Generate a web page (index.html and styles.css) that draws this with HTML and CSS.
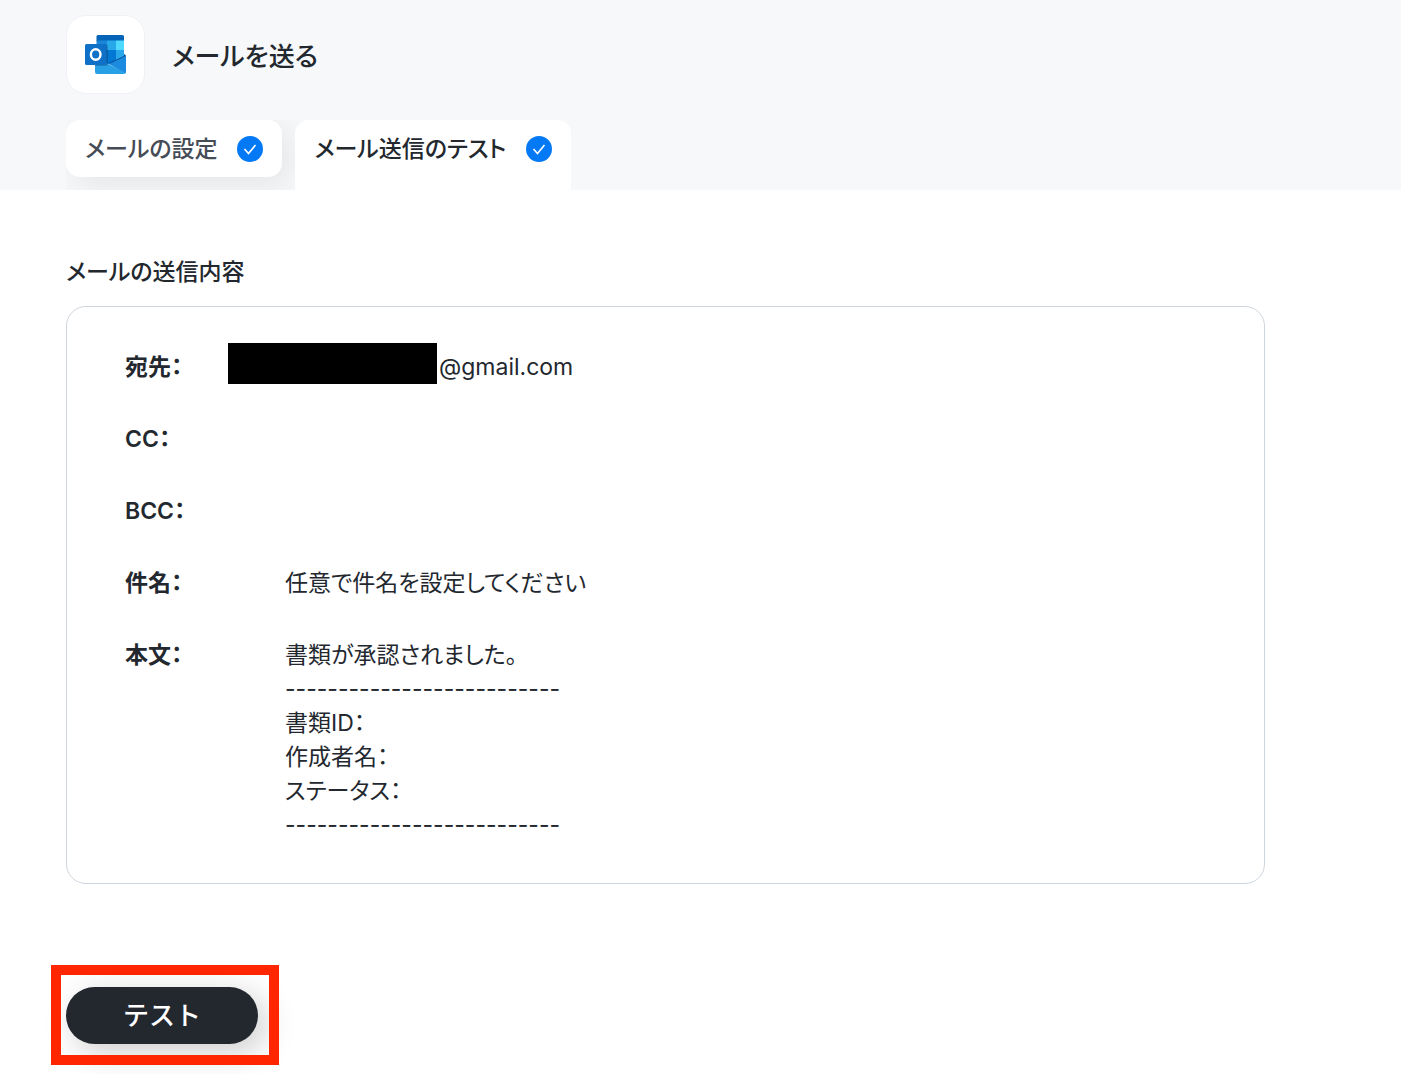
FILE: index.html
```html
<!DOCTYPE html>
<html lang="ja">
<head>
  <meta charset="UTF-8">
  <meta name="viewport" content="width=device-width, initial-scale=1.0">
  <title>メールを送る</title>
  <link rel="stylesheet" href="styles.css">
</head>
<body>
  <header class="header">
    <div class="title-row">
      <div class="app-icon">
        <svg width="42" height="39" viewBox="0 0 42 39" aria-hidden="true">
          <path d="M13 0h24.500q1.500 0 1.500 1.500V6H11.500V1.500Q11.500 0 13 0z" fill="#0364b8"/>
          <rect x="11.500" y="5.500" width="10.500" height="9.500" fill="#1a86d9"/>
          <rect x="22" y="5.500" width="9" height="9.500" fill="#28a8ea"/>
          <rect x="31" y="5.500" width="8" height="9.500" fill="#50d9ff"/>
          <rect x="11.500" y="15" width="10.500" height="14" fill="#0f6cbd"/>
          <rect x="22" y="15" width="9" height="14" fill="#0078d4"/>
          <rect x="31" y="15" width="8" height="14" fill="#28a8ea"/>
          <path d="M39 19l1.500 1q.5.500.5 1.500L26 30l-2-2L39 21z" fill="#0a4a94"/>
          <path d="M41 21v16q0 1-1 1.500L24 29z" fill="#1c8ade"/>
          <path d="M10 22l30.500 16q-.5 1-2 1H12q-2 0-2-2z" fill="#28a0e6"/>
          <path d="M11.500 9.500h9.500a2 2 0 0 1 2 2V29a2 2 0 0 1-2 2H10V22z" fill="#000" opacity=".2"/>
          <rect x="0" y="9" width="21.500" height="21" rx="1.500" fill="#0f70c8"/>
          <ellipse cx="10.700" cy="19.500" rx="4.800" ry="5.200" fill="none" stroke="#fff" stroke-width="2.400"/>
        </svg>
      </div>
      <h1>メールを送る</h1>
    </div>
    <nav class="tabs">
      <a class="tab" href="#settings">メールの設定
        <svg class="check" viewBox="0 0 26 26" aria-hidden="true"><circle cx="13" cy="13" r="13"/><path d="M7.500 13l4 4.500 7-8.500"/></svg>
      </a>
      <a class="tab active" href="#test" aria-current="page">メール送信のテスト
        <svg class="check" viewBox="0 0 26 26" aria-hidden="true"><circle cx="13" cy="13" r="13"/><path d="M7.500 13l4 4.500 7-8.500"/></svg>
      </a>
    </nav>
  </header>

  <main class="content" id="test">
    <h2>メールの送信内容</h2>
    <dl class="mail-card">
      <div class="mail-row">
        <dt>宛先：</dt>
        <dd class="address"><span class="mask"></span>@gmail.com</dd>
      </div>
      <div class="mail-row">
        <dt>CC：</dt>
        <dd></dd>
      </div>
      <div class="mail-row">
        <dt>BCC：</dt>
        <dd></dd>
      </div>
      <div class="mail-row">
        <dt>件名：</dt>
        <dd>任意で件名を設定してください</dd>
      </div>
      <div class="mail-row">
        <dt>本文：</dt>
        <dd>書類が承認されました。<br>
          --------------------------<br>
          書類ID：<br>
          作成者名：<br>
          ステータス：<br>
          --------------------------</dd>
      </div>
    </dl>
    <div class="action">
      <button class="test-btn" type="button">テスト</button>
    </div>
  </main>
</body>
</html>
```

FILE: styles.css
```css
* {
  box-sizing: border-box;
}
body {
  margin: 0;
  font-family: Inter, 'Noto Sans CJK JP', sans-serif;
  font-size: 23px;
  line-height: 34px;
  font-feature-settings: 'palt';
  color: #23282f;
  background: #fff;
}
h1, h2, dl, dd {
  margin: 0;
}
.header {
  padding: 15px 66px 0;
  background: #f7f8fa;
}
.title-row {
  display: flex;
  align-items: center;
  gap: 27px;
  margin-bottom: 26px;
}
.app-icon {
  display: flex;
  align-items: center;
  justify-content: center;
  width: 79px;
  height: 79px;
  background: #fff;
  border: 1px solid #f0f1f4;
  border-radius: 20px;
}
h1 {
  padding-top: 4px;
  font-size: 26px;
  font-weight: 500;
}
.tabs {
  display: flex;
  align-items: flex-start;
  gap: 13px;
  width: fit-content;
  overflow: hidden;
}
.tab {
  display: flex;
  align-items: center;
  gap: 20px;
  height: 57px;
  padding: 0 19px;
  border-radius: 14px;
  background: #fff;
  color: #454c56;
  text-decoration: none;
  font-weight: 500;
  box-shadow: 8px 8px 32px rgba(0, 0, 0, 0.08);
}
.tab.active {
  height: 70px;
  padding-bottom: 13px;
  border-radius: 14px 14px 0 0;
  color: #23282f;
  box-shadow: none;
}
.check {
  width: 26px;
  height: 26px;
}
.check circle {
  fill: #0479f5;
}
.check path {
  fill: none;
  stroke: #fff;
  stroke-width: 1.6;
}
.content {
  padding: 65px 136px 30px 66px;
}
h2 {
  margin-bottom: 17px;
  font-size: 23px;
  font-weight: 500;
}
.mail-card {
  display: flex;
  flex-direction: column;
  gap: 38px;
  padding: 43px 58px 41px;
  border: 1px solid #d0d6de;
  border-radius: 20px;
}
.mail-row {
  display: flex;
}
dt {
  width: 160px;
  font-weight: 600;
}
.address {
  position: relative;
  padding-left: 154px;
}
/* hides the local part of the address */
.mask {
  position: absolute;
  top: -7px;
  left: -57px;
  width: 209px;
  height: 41px;
  background: #000;
}
.action {
  position: relative;
  width: fit-content;
  margin-top: 103px;
}
.action::after {
  content: '';
  position: absolute;
  inset: -22px -21px -21px -15px;
  border: 10px solid #ff2600;
  pointer-events: none;
}
.test-btn {
  display: block;
  width: 192px;
  height: 57px;
  border: none;
  border-radius: 29px;
  background: #23282f;
  color: #fff;
  font: inherit;
  font-size: 26px;
  font-weight: 500;
  font-feature-settings: normal;
  box-shadow: 8px 8px 32px rgba(0, 0, 0, 0.2);
  cursor: pointer;
}
```
